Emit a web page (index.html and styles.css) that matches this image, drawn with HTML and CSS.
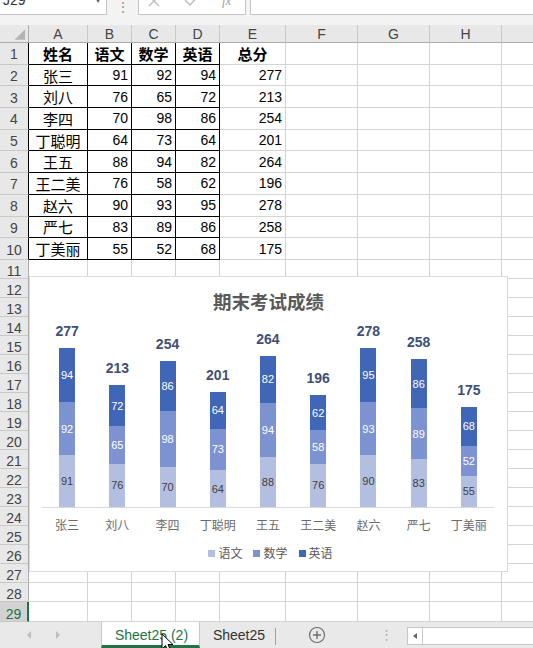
FILE: index.html
```
<!DOCTYPE html>
<html>
<head>
<meta charset="utf-8">
<link rel="stylesheet" href="styles.css">
</head>
<body>
<div class="fbar">
  <div class="namebox"><span class="nb-text">J29</span><span class="nb-arrow">▾</span></div>
  <div class="fdots">⋮</div>
  <div class="fbtns">
    <svg class="ic-x" width="14" height="14" viewBox="0 0 14 14"><path d="M2 -4 L12 6 M12 -4 L2 6" stroke="#bdbdbd" stroke-width="1.4" fill="none"/></svg>
    <svg class="ic-ok" width="16" height="14" viewBox="0 0 16 14"><path d="M1 0 L6 5 L15 -5" stroke="#bdbdbd" stroke-width="1.5" fill="none"/></svg>
    <span class="fx">fx</span>
  </div>
  <div class="finput"></div>
</div>

<div class="sheet">
  <div class="row h"><div class="corner"><svg width="29" height="18" viewBox="0 0 29 18"><polygon points="26,4 26,15 15,15" fill="#b4b4b4"/></svg></div><div>A</div><div>B</div><div>C</div><div>D</div><div>E</div><div>F</div><div>G</div><div>H</div><div>I</div></div>

  <div class="row d"><div class="rh">1</div><div class="t b">姓名</div><div class="t b">语文</div><div class="t b">数学</div><div class="t b">英语</div><div class="t b">总分</div><i></i><i></i><i></i><i></i></div>
  <div class="row d"><div class="rh">2</div><div class="t">张三</div><div>91</div><div>92</div><div>94</div><div>277</div><i></i><i></i><i></i><i></i></div>
  <div class="row d"><div class="rh">3</div><div class="t">刘八</div><div>76</div><div>65</div><div>72</div><div>213</div><i></i><i></i><i></i><i></i></div>
  <div class="row d"><div class="rh">4</div><div class="t">李四</div><div>70</div><div>98</div><div>86</div><div>254</div><i></i><i></i><i></i><i></i></div>
  <div class="row d"><div class="rh">5</div><div class="t">丁聪明</div><div>64</div><div>73</div><div>64</div><div>201</div><i></i><i></i><i></i><i></i></div>
  <div class="row d"><div class="rh">6</div><div class="t">王五</div><div>88</div><div>94</div><div>82</div><div>264</div><i></i><i></i><i></i><i></i></div>
  <div class="row d"><div class="rh">7</div><div class="t">王二美</div><div>76</div><div>58</div><div>62</div><div>196</div><i></i><i></i><i></i><i></i></div>
  <div class="row d"><div class="rh">8</div><div class="t">赵六</div><div>90</div><div>93</div><div>95</div><div>278</div><i></i><i></i><i></i><i></i></div>
  <div class="row d"><div class="rh">9</div><div class="t">严七</div><div>83</div><div>89</div><div>86</div><div>258</div><i></i><i></i><i></i><i></i></div>
  <div class="row d"><div class="rh">10</div><div class="t">丁美丽</div><div>55</div><div>52</div><div>68</div><div>175</div><i></i><i></i><i></i><i></i></div>

  <div class="row"><div class="rh">11</div><i></i><i></i><i></i><i></i><i></i><i></i><i></i><i></i><i></i></div>
  <div class="row"><div class="rh">12</div><i></i><i></i><i></i><i></i><i></i><i></i><i></i><i></i><i></i></div>
  <div class="row"><div class="rh">13</div><i></i><i></i><i></i><i></i><i></i><i></i><i></i><i></i><i></i></div>
  <div class="row"><div class="rh">14</div><i></i><i></i><i></i><i></i><i></i><i></i><i></i><i></i><i></i></div>
  <div class="row"><div class="rh">15</div><i></i><i></i><i></i><i></i><i></i><i></i><i></i><i></i><i></i></div>
  <div class="row"><div class="rh">16</div><i></i><i></i><i></i><i></i><i></i><i></i><i></i><i></i><i></i></div>
  <div class="row"><div class="rh">17</div><i></i><i></i><i></i><i></i><i></i><i></i><i></i><i></i><i></i></div>
  <div class="row"><div class="rh">18</div><i></i><i></i><i></i><i></i><i></i><i></i><i></i><i></i><i></i></div>
  <div class="row"><div class="rh">19</div><i></i><i></i><i></i><i></i><i></i><i></i><i></i><i></i><i></i></div>
  <div class="row"><div class="rh">20</div><i></i><i></i><i></i><i></i><i></i><i></i><i></i><i></i><i></i></div>
  <div class="row"><div class="rh">21</div><i></i><i></i><i></i><i></i><i></i><i></i><i></i><i></i><i></i></div>
  <div class="row"><div class="rh">22</div><i></i><i></i><i></i><i></i><i></i><i></i><i></i><i></i><i></i></div>
  <div class="row"><div class="rh">23</div><i></i><i></i><i></i><i></i><i></i><i></i><i></i><i></i><i></i></div>
  <div class="row"><div class="rh">24</div><i></i><i></i><i></i><i></i><i></i><i></i><i></i><i></i><i></i></div>
  <div class="row"><div class="rh">25</div><i></i><i></i><i></i><i></i><i></i><i></i><i></i><i></i><i></i></div>
  <div class="row"><div class="rh">26</div><i></i><i></i><i></i><i></i><i></i><i></i><i></i><i></i><i></i></div>
  <div class="row"><div class="rh">27</div><i></i><i></i><i></i><i></i><i></i><i></i><i></i><i></i><i></i></div>
  <div class="row"><div class="rh">28</div><i></i><i></i><i></i><i></i><i></i><i></i><i></i><i></i><i></i></div>
  <div class="row last"><div class="rh sel">29</div><i></i><i></i><i></i><i></i><i></i><i></i><i></i><i></i><i></i></div>

  <div class="chart">
    <div class="ctitle">期末考试成绩</div>
    <div class="plot">
      <div class="col"><div class="tot">277</div><div class="seg en" style="height:53.9px">94</div><div class="seg ma" style="height:52.7px">92</div><div class="seg ch" style="height:52.1px">91</div></div>
      <div class="col"><div class="tot">213</div><div class="seg en" style="height:41.3px">72</div><div class="seg ma" style="height:37.2px">65</div><div class="seg ch" style="height:43.5px">76</div></div>
      <div class="col"><div class="tot">254</div><div class="seg en" style="height:49.3px">86</div><div class="seg ma" style="height:56.2px">98</div><div class="seg ch" style="height:40.1px">70</div></div>
      <div class="col"><div class="tot">201</div><div class="seg en" style="height:36.7px">64</div><div class="seg ma" style="height:41.8px">73</div><div class="seg ch" style="height:36.7px">64</div></div>
      <div class="col"><div class="tot">264</div><div class="seg en" style="height:47.0px">82</div><div class="seg ma" style="height:53.9px">94</div><div class="seg ch" style="height:50.4px">88</div></div>
      <div class="col"><div class="tot">196</div><div class="seg en" style="height:35.5px">62</div><div class="seg ma" style="height:33.2px">58</div><div class="seg ch" style="height:43.5px">76</div></div>
      <div class="col"><div class="tot">278</div><div class="seg en" style="height:54.4px">95</div><div class="seg ma" style="height:53.3px">93</div><div class="seg ch" style="height:51.6px">90</div></div>
      <div class="col"><div class="tot">258</div><div class="seg en" style="height:49.3px">86</div><div class="seg ma" style="height:51.0px">89</div><div class="seg ch" style="height:47.6px">83</div></div>
      <div class="col"><div class="tot">175</div><div class="seg en" style="height:39.0px">68</div><div class="seg ma" style="height:29.8px">52</div><div class="seg ch" style="height:31.5px">55</div></div>
    </div>
    <div class="cats"><span>张三</span><span>刘八</span><span>李四</span><span>丁聪明</span><span>王五</span><span>王二美</span><span>赵六</span><span>严七</span><span>丁美丽</span></div>
    <div class="legend">
      <span class="li"><i class="sw ch"></i>语文</span>
      <span class="li"><i class="sw ma"></i>数学</span>
      <span class="li"><i class="sw en"></i>英语</span>
    </div>
  </div>
</div>

<div class="tabs">
  <div class="nav"><span class="tri l"></span><span class="tri r"></span></div>
  <div class="tab act">Sheet25 (2)</div>
  <div class="tab two">Sheet25</div>
  <div class="plus"><svg width="18" height="18" viewBox="0 0 18 18"><circle cx="9" cy="9" r="7.5" fill="none" stroke="#6d6d6d" stroke-width="1.2"/><path d="M9 5 V13 M5 9 H13" stroke="#6d6d6d" stroke-width="1.4"/></svg></div>
  <div class="tdots">⋮</div>
  <div class="hscroll"><div class="hs-btn"><span class="tri sl"></span></div><div class="hs-track"></div></div>
  <svg class="cursor" width="14" height="18" viewBox="0 0 14 18"><path d="M1 1 L1 16 L4.5 12.5 L7 18 L9.5 17 L7 11.5 L12 11.5 Z" fill="#fff" stroke="#000" stroke-width="1"/></svg>
</div>
</body>
</html>
```

FILE: styles.css
```
html, body {
  margin: 0;
  padding: 0;
}
body {
  width: 533px;
  height: 648px;
  overflow: hidden;
  background: #fff;
  font-family: "Liberation Sans", "Noto Sans CJK SC", sans-serif;
  color: #000;
}

/* formula bar */
.fbar {
  height: 25px;
  background: #f3f3f3;
  display: flex;
  align-items: flex-start;
}
.namebox {
  width: 106px;
  height: 14px;
  background: #fff;
  border-right: 1px solid #c6c6c6;
  border-bottom: 1px solid #c6c6c6;
  overflow: hidden;
  display: flex;
  justify-content: space-between;
  font-size: 14px;
  color: #333;
}
.nb-text {
  line-height: 14px;
  margin-top: -7px;
  padding-left: 3px;
}
.nb-arrow {
  line-height: 14px;
  margin-top: -8px;
  padding-right: 5px;
  font-size: 12px;
  color: #555;
}
.fdots {
  width: 31px;
  height: 14px;
  overflow: hidden;
  text-align: center;
  font-size: 14px;
  line-height: 14px;
  color: #9a9a9a;
}
.fbtns {
  width: 106px;
  height: 14px;
  background: #fff;
  border: 1px solid #c6c6c6;
  border-top: none;
  overflow: hidden;
  display: flex;
  align-items: flex-start;
}
.ic-x { margin-left: 8px; }
.ic-ok { margin-left: 23px; }
.fx {
  margin-left: 22px;
  font-family: "Liberation Serif", serif;
  font-style: italic;
  font-size: 13px;
  line-height: 14px;
  margin-top: -6px;
  color: #a0a0a0;
}
.finput {
  flex: 1;
  height: 14px;
  margin-left: 4px;
  background: #fff;
  border-left: 1px solid #c6c6c6;
  border-bottom: 1px solid #c6c6c6;
}

/* sheet grid */
.sheet {
  position: relative;
}
.row {
  display: grid;
  grid-template-columns: 29px 59px 44px 44px 44px 66px 72px 72px 72px 72px;
  height: 19px;
  overflow: hidden;
}
.row.last {
  height: 20px;
}
.row > * {
  box-sizing: border-box;
  border-right: 1px solid #d4d4d4;
  border-bottom: 1px solid #d4d4d4;
  display: flex;
  align-items: center;
  justify-content: flex-end;
  padding-right: 3px;
  font-size: 14px;
  white-space: nowrap;
  overflow: hidden;
}
.row.h {
  height: 18px;
}
.row.h > * {
  background: #e8e8e8;
  border-bottom-color: #ababab;
  border-right-color: #c8c8c8;
  justify-content: center;
  padding: 0;
  color: #444;
  font-size: 14px;
}
.row.h > .corner {
  border-right-color: #ababab;
}
.row.d {
  height: 21.7px;
}
.row .rh {
  background: #e8e8e8;
  border-right-color: #ababab;
  border-bottom-color: #c8c8c8;
  justify-content: center;
  padding: 5px 0 0 0;
  color: #444;
  font-size: 14px;
}
.row.d .rh {
  border-right-color: #000;
  padding-top: 2px;
}
.row.d > :nth-child(n+2):nth-child(-n+5) {
  border-color: #000;
}
.row .t {
  justify-content: center;
  padding: 0;
  font-size: 15px;
  font-family: "Noto Sans CJK SC", sans-serif;
}
.row .b {
  font-weight: bold;
}
.row .rh.sel {
  background: #d2d2d2;
  color: #217346;
  border-right: 2px solid #217346;
}

/* chart */
.chart {
  position: absolute;
  left: 29px;
  top: 251px;
  width: 479px;
  height: 296px;
  box-sizing: border-box;
  border: 1px solid #d9d9d9;
  background: #fff;
  display: flex;
  flex-direction: column;
  font-family: "Liberation Sans", "Noto Sans CJK SC", sans-serif;
}
.ctitle {
  height: 51px;
  box-sizing: border-box;
  padding-top: 13px;
  line-height: 22px;
  text-align: center;
  font-family: "Noto Sans CJK SC", sans-serif;
  font-weight: bold;
  font-size: 18.5px;
  color: #595959;
  flex-shrink: 0;
}
.plot {
  height: 179px;
  width: 452px;
  margin-left: 12px;
  border-bottom: 1px solid #d9d9d9;
  display: flex;
  flex-shrink: 0;
}
.col {
  flex: 1;
  display: flex;
  flex-direction: column;
  justify-content: flex-end;
  align-items: center;
}
.col > * {
  flex-shrink: 0;
}
.tot {
  font-weight: bold;
  font-size: 14px;
  line-height: 16px;
  margin-bottom: 9px;
  color: #3f4f78;
}
.seg {
  width: 16px;
  display: flex;
  align-items: center;
  justify-content: center;
  font-size: 11px;
  color: #fff;
}
.en { background: #4066b8; }
.ma { background: #7d93d1; }
.ch { background: #b3bfe1; }
.seg.ch { color: #404040; }
.cats {
  width: 452px;
  margin-left: 12px;
  margin-top: 9px;
  display: flex;
  line-height: 16px;
  font-family: "Noto Sans CJK SC", sans-serif;
  font-size: 12px;
  color: #6a6a6a;
}
.cats span {
  flex: 1;
  text-align: center;
}
.legend {
  margin-top: 12px;
  line-height: 16px;
  display: flex;
  justify-content: center;
  gap: 11px;
  font-family: "Noto Sans CJK SC", sans-serif;
  font-size: 12px;
  color: #595959;
  padding-left: 4px;
}
.li {
  display: flex;
  align-items: center;
}
.sw {
  width: 7px;
  height: 7px;
  margin-right: 3px;
}

/* sheet tabs */
.tabs {
  position: relative;
  height: 26px;
  background: #e9e9e9;
  display: flex;
  align-items: stretch;
  font-size: 14px;
}
.nav {
  width: 101px;
  display: flex;
  align-items: center;
}
.tri {
  width: 0;
  height: 0;
  border-top: 4px solid transparent;
  border-bottom: 4px solid transparent;
}
.tri.l {
  margin-left: 27px;
  border-right: 4px solid #bdbdbd;
}
.tri.r {
  margin-left: 25px;
  border-left: 4px solid #bdbdbd;
}
.tab {
  display: flex;
  align-items: center;
  justify-content: center;
  color: #333;
}
.tab.act {
  width: 99px;
  box-sizing: border-box;
  background: #fff;
  color: #217346;
  border-bottom: 3px solid #217346;
  border-left: 1px solid #c8c8c8;
  border-right: 1px solid #c8c8c8;
  padding-top: 3px;
  padding-left: 2px;
}
.tab.two {
  width: 76px;
  position: relative;
  padding-left: 2px;
  box-sizing: border-box;
}
.tab.two::after {
  content: "";
  position: absolute;
  right: 0;
  top: 6px;
  bottom: 3px;
  border-right: 1px solid #a0a0a0;
}
.plus {
  width: 82px;
  display: flex;
  align-items: center;
  justify-content: center;
  padding-top: 1px;
}
.tdots {
  width: 49px;
  display: flex;
  align-items: center;
  justify-content: flex-end;
  padding-right: 14px;
  box-sizing: border-box;
  color: #b0b0b0;
  font-size: 13px;
}
.hscroll {
  flex: 1;
  margin: 5px 0 3px 0;
  display: flex;
  border: 1px solid #c6c6c6;
  border-right: none;
  background: #fff;
}
.hs-btn {
  width: 14px;
  border-right: 1px solid #c6c6c6;
  display: flex;
  align-items: center;
  justify-content: center;
}
.tri.sl {
  border-top-width: 3px;
  border-bottom-width: 3px;
  border-right: 4px solid #666;
}
.hs-track {
  flex: 1;
}
.cursor {
  position: absolute;
  left: 161px;
  top: 11px;
}
```
